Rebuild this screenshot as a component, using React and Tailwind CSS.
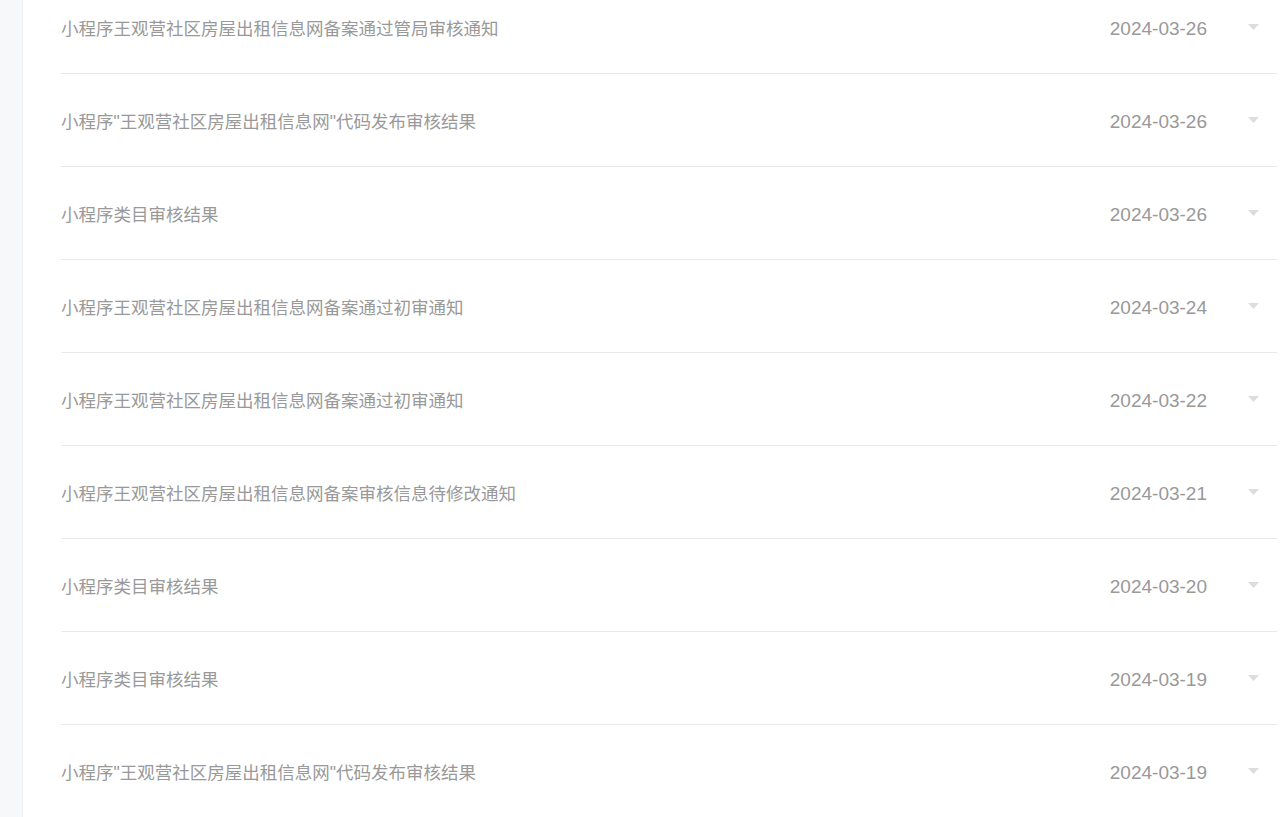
import React from 'react';

const notices = [
  { title: '小程序王观营社区房屋出租信息网备案通过管局审核通知', date: '2024-03-26' },
  { title: '小程序"王观营社区房屋出租信息网"代码发布审核结果', date: '2024-03-26' },
  { title: '小程序类目审核结果', date: '2024-03-26' },
  { title: '小程序王观营社区房屋出租信息网备案通过初审通知', date: '2024-03-24' },
  { title: '小程序王观营社区房屋出租信息网备案通过初审通知', date: '2024-03-22' },
  { title: '小程序王观营社区房屋出租信息网备案审核信息待修改通知', date: '2024-03-21' },
  { title: '小程序类目审核结果', date: '2024-03-20' },
  { title: '小程序类目审核结果', date: '2024-03-19' },
  { title: '小程序"王观营社区房屋出租信息网"代码发布审核结果', date: '2024-03-19' },
];

const App = () => {
  return (
    <div
      className="flex h-[817px] w-[1280px] overflow-hidden bg-white"
      style={{ fontFamily: '"Liberation Sans", "Noto Sans CJK SC", sans-serif' }}
    >
      {/* Side strip */}
      <div className="w-[23px] shrink-0 bg-[#f7f8fa] border-r border-[#eef0f3]" />

      {/* Notice list */}
      <div className="flex-1 pl-[38px] pr-[3px]">
        <div className="-mt-[19px]">
          {notices.map((item, index) => (
            <div
              key={index}
              className="flex h-[93px] items-center border-b border-[#e8e8e8] pt-[4px] text-[#999999]"
            >
              <span className="flex-1 truncate text-[17.5px]">{item.title}</span>
              <span className="w-[100px] text-right text-[19px]">{item.date}</span>
              <span className="ml-[41px] mr-[18px] flex h-[10px] w-[11px] items-start justify-center">
                <svg width="11" height="6" viewBox="0 0 11 6">
                  <path d="M0 0 L11 0 L5.5 6 Z" fill="#dddddd" />
                </svg>
              </span>
            </div>
          ))}
        </div>
      </div>
    </div>
  );
};

export default App;
